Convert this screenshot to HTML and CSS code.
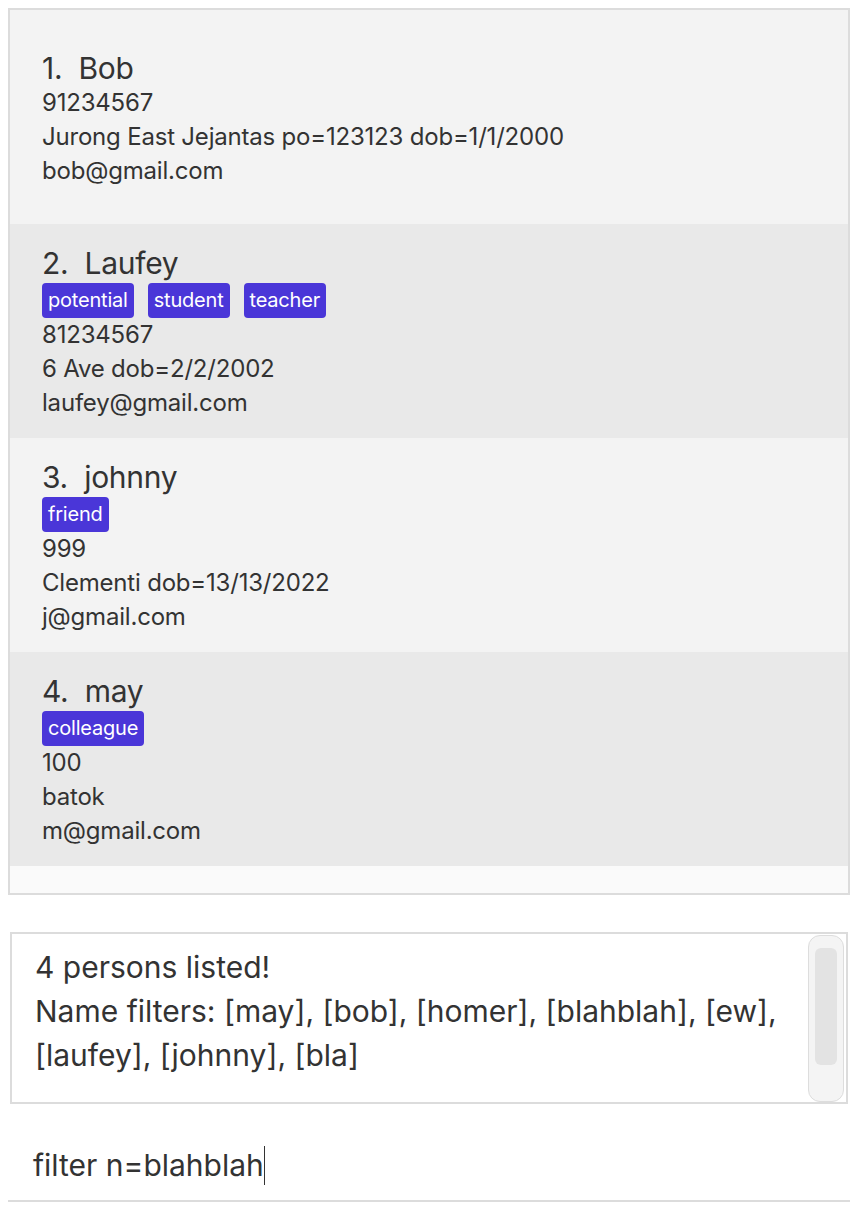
FILE: index.html
```html
<!DOCTYPE html>
<html lang="en">
<head>
<meta charset="utf-8">
<title>Address Book</title>
<link rel="stylesheet" href="styles.css">
</head>
<body>
<div class="app">
  <div class="list">
    <div class="card odd">
      <div class="name">1.&nbsp; Bob</div>
      <div class="line">91234567</div>
      <div class="line">Jurong East Jejantas po=123123 dob=1/1/2000</div>
      <div class="line">bob@gmail.com</div>
    </div>
    <div class="card even">
      <div class="name">2.&nbsp; Laufey</div>
      <div class="tags"><span class="tag">potential</span><span class="tag">student</span><span class="tag">teacher</span></div>
      <div class="line">81234567</div>
      <div class="line">6 Ave dob=2/2/2002</div>
      <div class="line">laufey@gmail.com</div>
    </div>
    <div class="card odd">
      <div class="name">3.&nbsp; johnny</div>
      <div class="tags"><span class="tag">friend</span></div>
      <div class="line">999</div>
      <div class="line">Clementi dob=13/13/2022</div>
      <div class="line">j@gmail.com</div>
    </div>
    <div class="card even">
      <div class="name">4.&nbsp; may</div>
      <div class="tags"><span class="tag">colleague</span></div>
      <div class="line">100</div>
      <div class="line">batok</div>
      <div class="line">m@gmail.com</div>
    </div>
    <div class="filler"></div>
  </div>

  <div class="result">
    <div class="result-text">4 persons listed!<br>Name filters: [may], [bob], [homer], [blahblah], [ew],<br>[laufey], [johnny], [bla]</div>
    <div class="scrollbar"><div class="thumb"></div></div>
  </div>

  <div class="command">
    <span class="command-text">filter n=blahblah</span><span class="caret"></span>
  </div>
</div>
</body>
</html>
```

FILE: styles.css
```css
html, body {
  margin: 0;
  padding: 0;
  background: #ffffff;
}

body {
  font-family: Inter, "Noto Sans", "Liberation Sans", sans-serif;
  color: #333333;
}

.app {
  display: flex;
  flex-direction: column;
  padding-top: 8px;
}

.list {
  margin: 0 14px 0 8px;
  border: 2px solid #dcdcdc;
  background: #fafafa;
  display: flex;
  flex-direction: column;
}

.card {
  height: 214px;
  box-sizing: border-box;
  padding: 3px 0 0 32px;
  display: flex;
  flex-direction: column;
  justify-content: center;
}

.card.odd { background: #f3f3f3; }
.card.even { background: #e9e9e9; }

.filler {
  height: 27px;
}

.name {
  font-size: 30px;
  line-height: 36px;
  letter-spacing: -0.3px;
}

.line {
  font-size: 24px;
  line-height: 34px;
  letter-spacing: -0.2px;
}

.tags {
  display: flex;
  gap: 14px;
  margin-top: 2px;
}

.tag {
  background: #4a36d8;
  color: #ffffff;
  font-size: 20px;
  line-height: 35px;
  height: 35px;
  padding: 0 6px;
  border-radius: 4px;
  letter-spacing: -0.2px;
}

.result {
  margin: 37px 16px 0 10px;
  height: 172px;
  box-sizing: border-box;
  border: 2px solid #dcdcdc;
  background: #ffffff;
  display: flex;
}

.result-text {
  flex: 1;
  padding: 11px 0 0 23px;
  font-size: 30px;
  line-height: 44px;
  letter-spacing: 0;
}

.scrollbar {
  width: 36px;
  margin: 1px 2px 0 0;
  box-sizing: border-box;
  border: 1.5px solid #dddddd;
  border-radius: 12px;
  background: #f4f4f4;
  padding: 12px 6px 0 6px;
}

.thumb {
  height: 117px;
  background: #e3e3e3;
  border-radius: 6px;
}

.command {
  margin: 0 14px 0 8px;
  height: 98px;
  box-sizing: border-box;
  border-bottom: 2px solid #dcdcdc;
  display: flex;
  align-items: center;
  padding: 26px 0 0 25px;
}

.command-text {
  font-size: 30px;
  line-height: 40px;
  letter-spacing: 0;
}

.caret {
  display: inline-block;
  width: 1.5px;
  height: 39px;
  background: #333333;
}
```
